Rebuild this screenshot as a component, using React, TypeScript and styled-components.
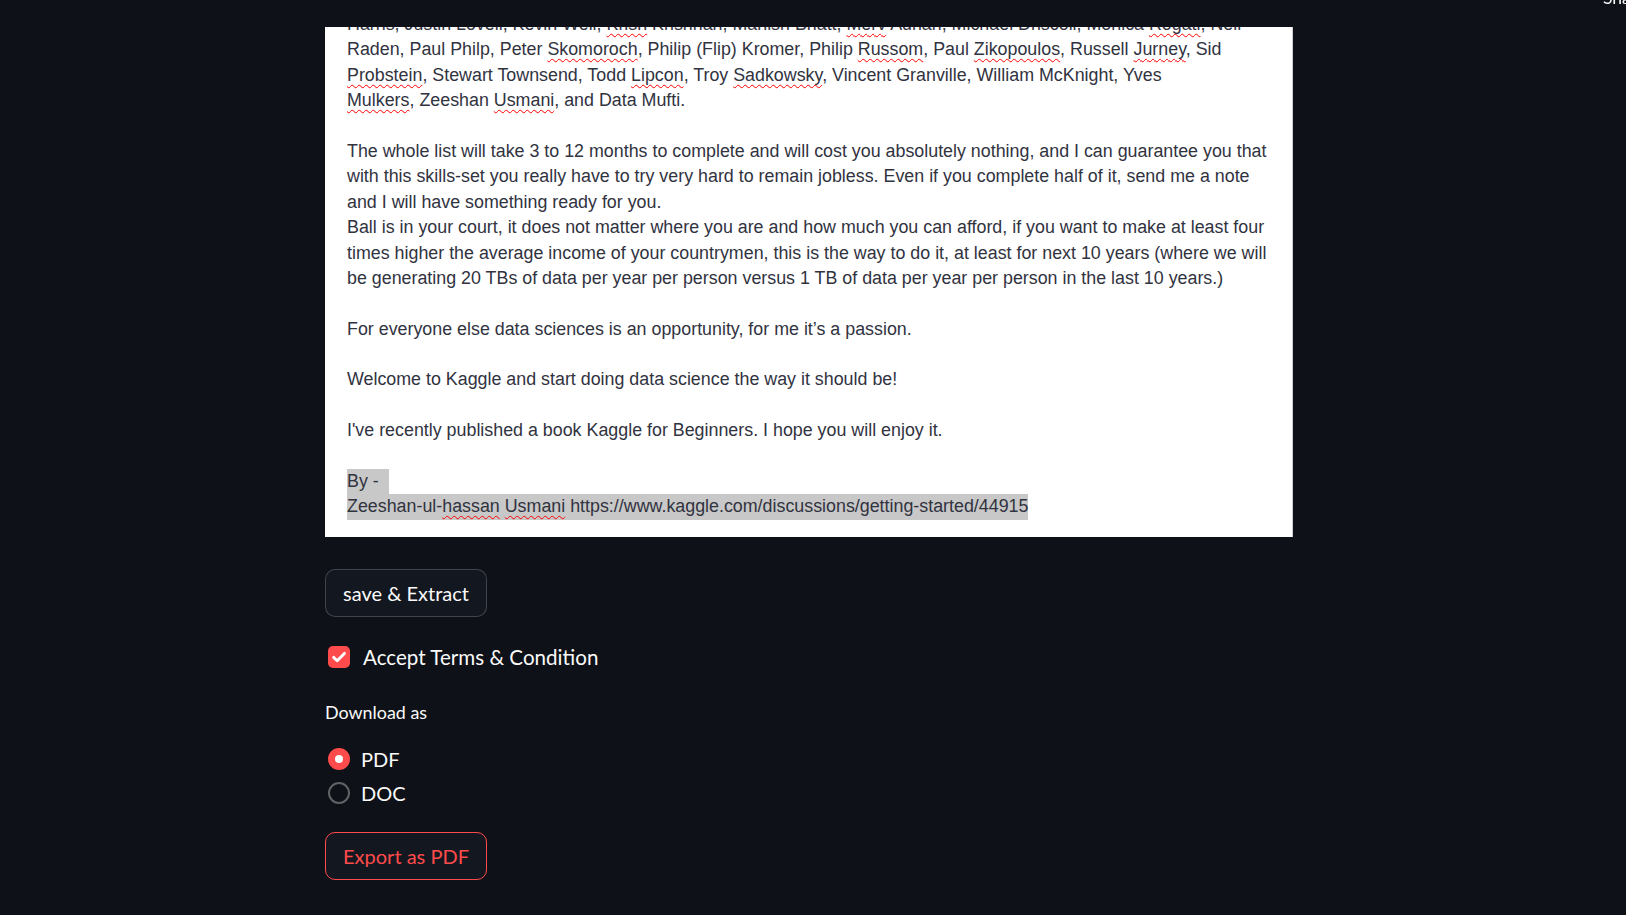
import React, { useState } from "react";
import styled, { createGlobalStyle } from "styled-components";

const GlobalStyle = createGlobalStyle`
  html, body { margin: 0; padding: 0; background: #0e1117; overflow: hidden; }
  * { box-sizing: border-box; }
`;

const Page = styled.div`
  width: 1626px;
  height: 915px;
  background: #0e1117;
  padding: 27px 0 0 325px;
  font-family: "Source Sans Pro", Lato, "Noto Sans", sans-serif;
  color: #fafafa;
`;

const HeaderText = styled.span`
  position: fixed;
  top: -13px;
  left: 1603px;
  font-family: Lato, sans-serif;
  font-size: 17.5px;
  color: #fafafa;
  white-space: nowrap;
`;

const Column = styled.div`
  width: 968px;
  display: flex;
  flex-direction: column;
  align-items: flex-start;
`;

const DocFrame = styled.div`
  width: 968px;
  background: #ffffff;
  border-right: 1px solid #cfcfcf;
  overflow: hidden;
  padding: 0 22px 17px 22px;
`;

const DocText = styled.div`
  margin-top: -15px;
  font-family: "Liberation Sans", Arial, sans-serif;
  font-size: 17.85px;
  line-height: 25.4px;
  color: #31333f;
  white-space: nowrap;
`;

const Line = styled.div`
  height: 25.4px;
`;

const Misspelled = styled.span`
  text-decoration: underline wavy #f00;
  text-decoration-thickness: 1px;
  text-underline-offset: 3px;
  text-decoration-skip-ink: none;
`;

const Highlight = styled.span<{ $extra?: number }>`
  display: inline-block;
  background: #c8c8c8;
  padding-right: ${(p) => p.$extra ?? 0}px;
`;

const Button = styled.button<{ $primary?: boolean; $mt: number }>`
  margin-top: ${(p) => p.$mt}px;
  height: 48px;
  padding: 0 15px;
  border-radius: 10px;
  background: #13171f;
  border: 1.25px solid ${(p) => (p.$primary ? "#ff4b4b" : "rgba(250,250,250,0.2)")};
  color: ${(p) => (p.$primary ? "#ff4b4b" : "#fafafa")};
  font-family: "Source Sans Pro", Lato, sans-serif;
  font-size: 20px;
  line-height: 1;
  width: 162px;
  display: flex;
  align-items: center;
  justify-content: center;
  cursor: pointer;
`;

const CheckRow = styled.label`
  margin-top: 20px;
  height: 40px;
  display: flex;
  align-items: center;
  gap: 13px;
  padding-left: 3px;
  font-size: 20.6px;
  color: #fafafa;
  cursor: pointer;
`;

const CheckBox = styled.span<{ $checked: boolean }>`
  width: 22px;
  height: 22px;
  border-radius: 5px;
  background: ${(p) => (p.$checked ? "#ff4b4b" : "transparent")};
  border: ${(p) => (p.$checked ? "none" : "2px solid rgba(250,250,250,0.3)")};
  display: flex;
  align-items: center;
  justify-content: center;
`;

const GroupLabel = styled.div`
  margin-top: 20px;
  height: 30px;
  display: flex;
  align-items: center;
  font-size: 17.9px;
  color: #fafafa;
`;

const RadioGroup = styled.div`
  margin-top: 15px;
  display: flex;
  flex-direction: column;
`;

const RadioRow = styled.label`
  height: 34px;
  display: flex;
  align-items: center;
  gap: 11px;
  padding-left: 3px;
  font-size: 20px;
  color: #fafafa;
  cursor: pointer;
`;

const RadioDot = styled.span<{ $checked: boolean }>`
  width: 22px;
  height: 22px;
  border-radius: 50%;
  background: ${(p) => (p.$checked ? "#ff4b4b" : "transparent")};
  border: ${(p) => (p.$checked ? "none" : "2.5px solid rgba(250,250,250,0.35)")};
  display: flex;
  align-items: center;
  justify-content: center;
  &::after {
    content: "";
    display: ${(p) => (p.$checked ? "block" : "none")};
    width: 8px;
    height: 8px;
    border-radius: 50%;
    background: #ffffff;
  }
`;

type Seg = string | { m: string };

const lines: Seg[][] = [
  ["Harris, Justin Lovell, Kevin Weil, ", { m: "Krish" }, " Krishnan, Manish Bhatt, ", { m: "Merv" }, " Adrian, Michael Driscoll, Monica ", { m: "Rogati" }, ", Neil"],
  ["Raden, Paul Philp, Peter ", { m: "Skomoroch" }, ", Philip (Flip) Kromer, Philip ", { m: "Russom" }, ", Paul ", { m: "Zikopoulos" }, ", Russell ", { m: "Jurney" }, ", Sid"],
  [{ m: "Probstein" }, ", Stewart Townsend, Todd ", { m: "Lipcon" }, ", Troy ", { m: "Sadkowsky" }, ", Vincent Granville, William McKnight, Yves"],
  [{ m: "Mulkers" }, ", Zeeshan ", { m: "Usmani" }, ", and Data Mufti."],
  [],
  ["The whole list will take 3 to 12 months to complete and will cost you absolutely nothing, and I can guarantee you that"],
  ["with this skills-set you really have to try very hard to remain jobless. Even if you complete half of it, send me a note"],
  ["and I will have something ready for you."],
  ["Ball is in your court, it does not matter where you are and how much you can afford, if you want to make at least four"],
  ["times higher the average income of your countrymen, this is the way to do it, at least for next 10 years (where we will"],
  ["be generating 20 TBs of data per year per person versus 1 TB of data per year per person in the last 10 years.)"],
  [],
  ["For everyone else data sciences is an opportunity, for me it\u2019s a passion."],
  [],
  ["Welcome to Kaggle and start doing data science the way it should be!"],
  [],
  ["I've recently published a book Kaggle for Beginners. I hope you will enjoy it."],
  [],
];

const renderSegs = (segs: Seg[]) =>
  segs.map((s, i) =>
    typeof s === "string" ? <React.Fragment key={i}>{s}</React.Fragment> : <Misspelled key={i}>{s.m}</Misspelled>
  );

const Check = () => (
  <svg width="16" height="16" viewBox="0 0 16 16" fill="none">
    <path d="M2.6 8.4 L6.2 11.8 L13.4 4.4" stroke="#fff" strokeWidth="2.9" strokeLinecap="round" strokeLinejoin="round" />
  </svg>
);

export default function App() {
  const [accepted, setAccepted] = useState(true);
  const [format, setFormat] = useState<"PDF" | "DOC">("PDF");

  return (
    <Page>
      <GlobalStyle />
      <HeaderText>Share</HeaderText>
      <Column>
        <DocFrame>
          <DocText>
            {lines.map((segs, i) => (
              <Line key={i}>{renderSegs(segs)}</Line>
            ))}
            <Line>
              <Highlight $extra={5}>By -&nbsp;</Highlight>
            </Line>
            <Line>
              <Highlight>
                Zeeshan-ul-<Misspelled>hassan</Misspelled> <Misspelled>Usmani</Misspelled>{" "}
                https://www.kaggle.com/discussions/getting-started/44915
              </Highlight>
            </Line>
          </DocText>
        </DocFrame>

        <Button $mt={32}>save &amp; Extract</Button>

        <CheckRow onClick={() => setAccepted((a) => !a)}>
          <CheckBox $checked={accepted}>{accepted && <Check />}</CheckBox>
          Accept Terms &amp; Condition
        </CheckRow>

        <GroupLabel>Download as</GroupLabel>
        <RadioGroup>
          {(["PDF", "DOC"] as const).map((f) => (
            <RadioRow key={f} onClick={() => setFormat(f)}>
              <RadioDot $checked={format === f} />
              {f}
            </RadioRow>
          ))}
        </RadioGroup>

        <Button $primary $mt={22}>Export as {format}</Button>
      </Column>
    </Page>
  );
}
